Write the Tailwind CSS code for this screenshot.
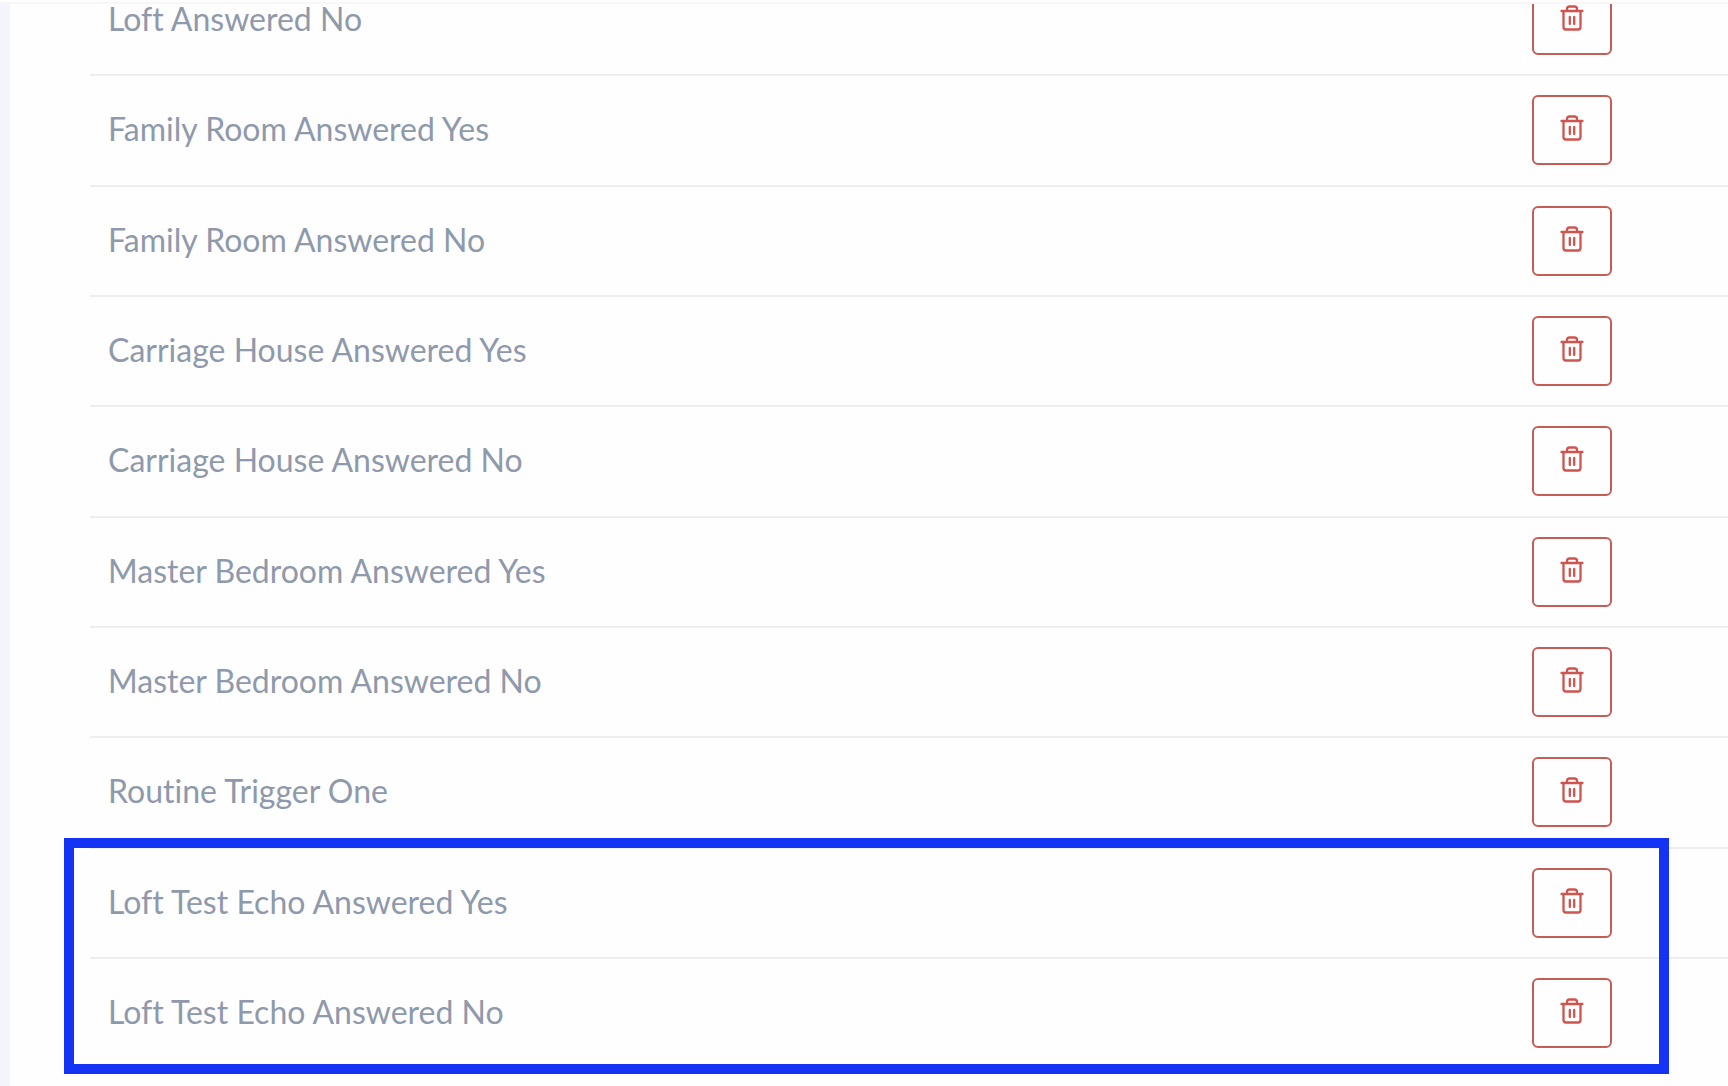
<!DOCTYPE html>
<html lang="en">
<head>
<meta charset="utf-8">
<title>Triggers</title>
<script src="https://cdn.jsdelivr.net/npm/@tailwindcss/browser@4"></script>
</head>
<body class="relative flex h-screen flex-col overflow-hidden bg-[#fefefe] font-['Lato','Open_Sans',sans-serif]">
<svg class="hidden" aria-hidden="true">
  <symbol id="trash" viewBox="0 0 24 26" fill="none" stroke="currentColor" stroke-width="2.3" stroke-linecap="round" stroke-linejoin="round">
    <path d="M1.500 6H22.500M3.500 6V22Q3.500 24.500 6 24.500H18Q20.500 24.500 20.500 22V6M7 6V4Q7 1.500 9.500 1.500H14.500Q17 1.500 17 4V6M9.800 12V19M14.200 12V19"/>
  </symbol>
</svg>
<header class="h-1 shrink-0 border-b-2 border-[#f7f7f8]"></header>
<main class="min-h-0 flex-1 overflow-hidden border-l-10 border-[#f4f4fb] pl-20">
  <table class="-mt-[38px] w-full border-separate border-spacing-0 text-[32px] leading-9 text-[#8f99ac] [font-variant-ligatures:no-common-ligatures] [&_td]:border-[#eeeeef] [&_td]:align-top [&_tr]:h-[110px] [&_tr:nth-child(3n+2)]:h-[111px] [&_tr:not(:last-child)_td]:border-b-2 [&_td:first-child]:pt-[35px] [&_td:first-child]:pl-[18px] [&_td:last-child]:w-[196px] [&_td:last-child]:pt-[19px] [&_button]:flex [&_button]:h-[70px] [&_button]:w-20 [&_button]:items-center [&_button]:justify-center [&_button]:rounded-md [&_button]:border-2 [&_button]:border-[#c95b56] [&_button]:pr-[1px] [&_button]:pb-[4px] [&_button]:text-[#cf544e] [&_svg]:h-[26px] [&_svg]:w-6">
    <tbody>
      <tr><td>Loft Answered No</td><td><button aria-label="Delete Loft Answered No"><svg><use href="#trash"/></svg></button></td></tr>
      <tr><td>Family Room Answered Yes</td><td><button aria-label="Delete Family Room Answered Yes"><svg><use href="#trash"/></svg></button></td></tr>
      <tr><td>Family Room Answered No</td><td><button aria-label="Delete Family Room Answered No"><svg><use href="#trash"/></svg></button></td></tr>
      <tr><td>Carriage House Answered Yes</td><td><button aria-label="Delete Carriage House Answered Yes"><svg><use href="#trash"/></svg></button></td></tr>
      <tr><td>Carriage House Answered No</td><td><button aria-label="Delete Carriage House Answered No"><svg><use href="#trash"/></svg></button></td></tr>
      <tr><td>Master Bedroom Answered Yes</td><td><button aria-label="Delete Master Bedroom Answered Yes"><svg><use href="#trash"/></svg></button></td></tr>
      <tr><td>Master Bedroom Answered No</td><td><button aria-label="Delete Master Bedroom Answered No"><svg><use href="#trash"/></svg></button></td></tr>
      <tr><td>Routine Trigger One</td><td><button aria-label="Delete Routine Trigger One"><svg><use href="#trash"/></svg></button></td></tr>
      <tr><td>Loft Test Echo Answered Yes</td><td><button aria-label="Delete Loft Test Echo Answered Yes"><svg><use href="#trash"/></svg></button></td></tr>
      <tr><td>Loft Test Echo Answered No</td><td><button aria-label="Delete Loft Test Echo Answered No"><svg><use href="#trash"/></svg></button></td></tr>
    </tbody>
  </table>
</main>
<!-- Highlight around the two newest triggers -->
<div class="pointer-events-none absolute top-[838px] right-[59px] left-16 h-[236px] border-10 border-[#1433f5]"></div>
</body>
</html>
